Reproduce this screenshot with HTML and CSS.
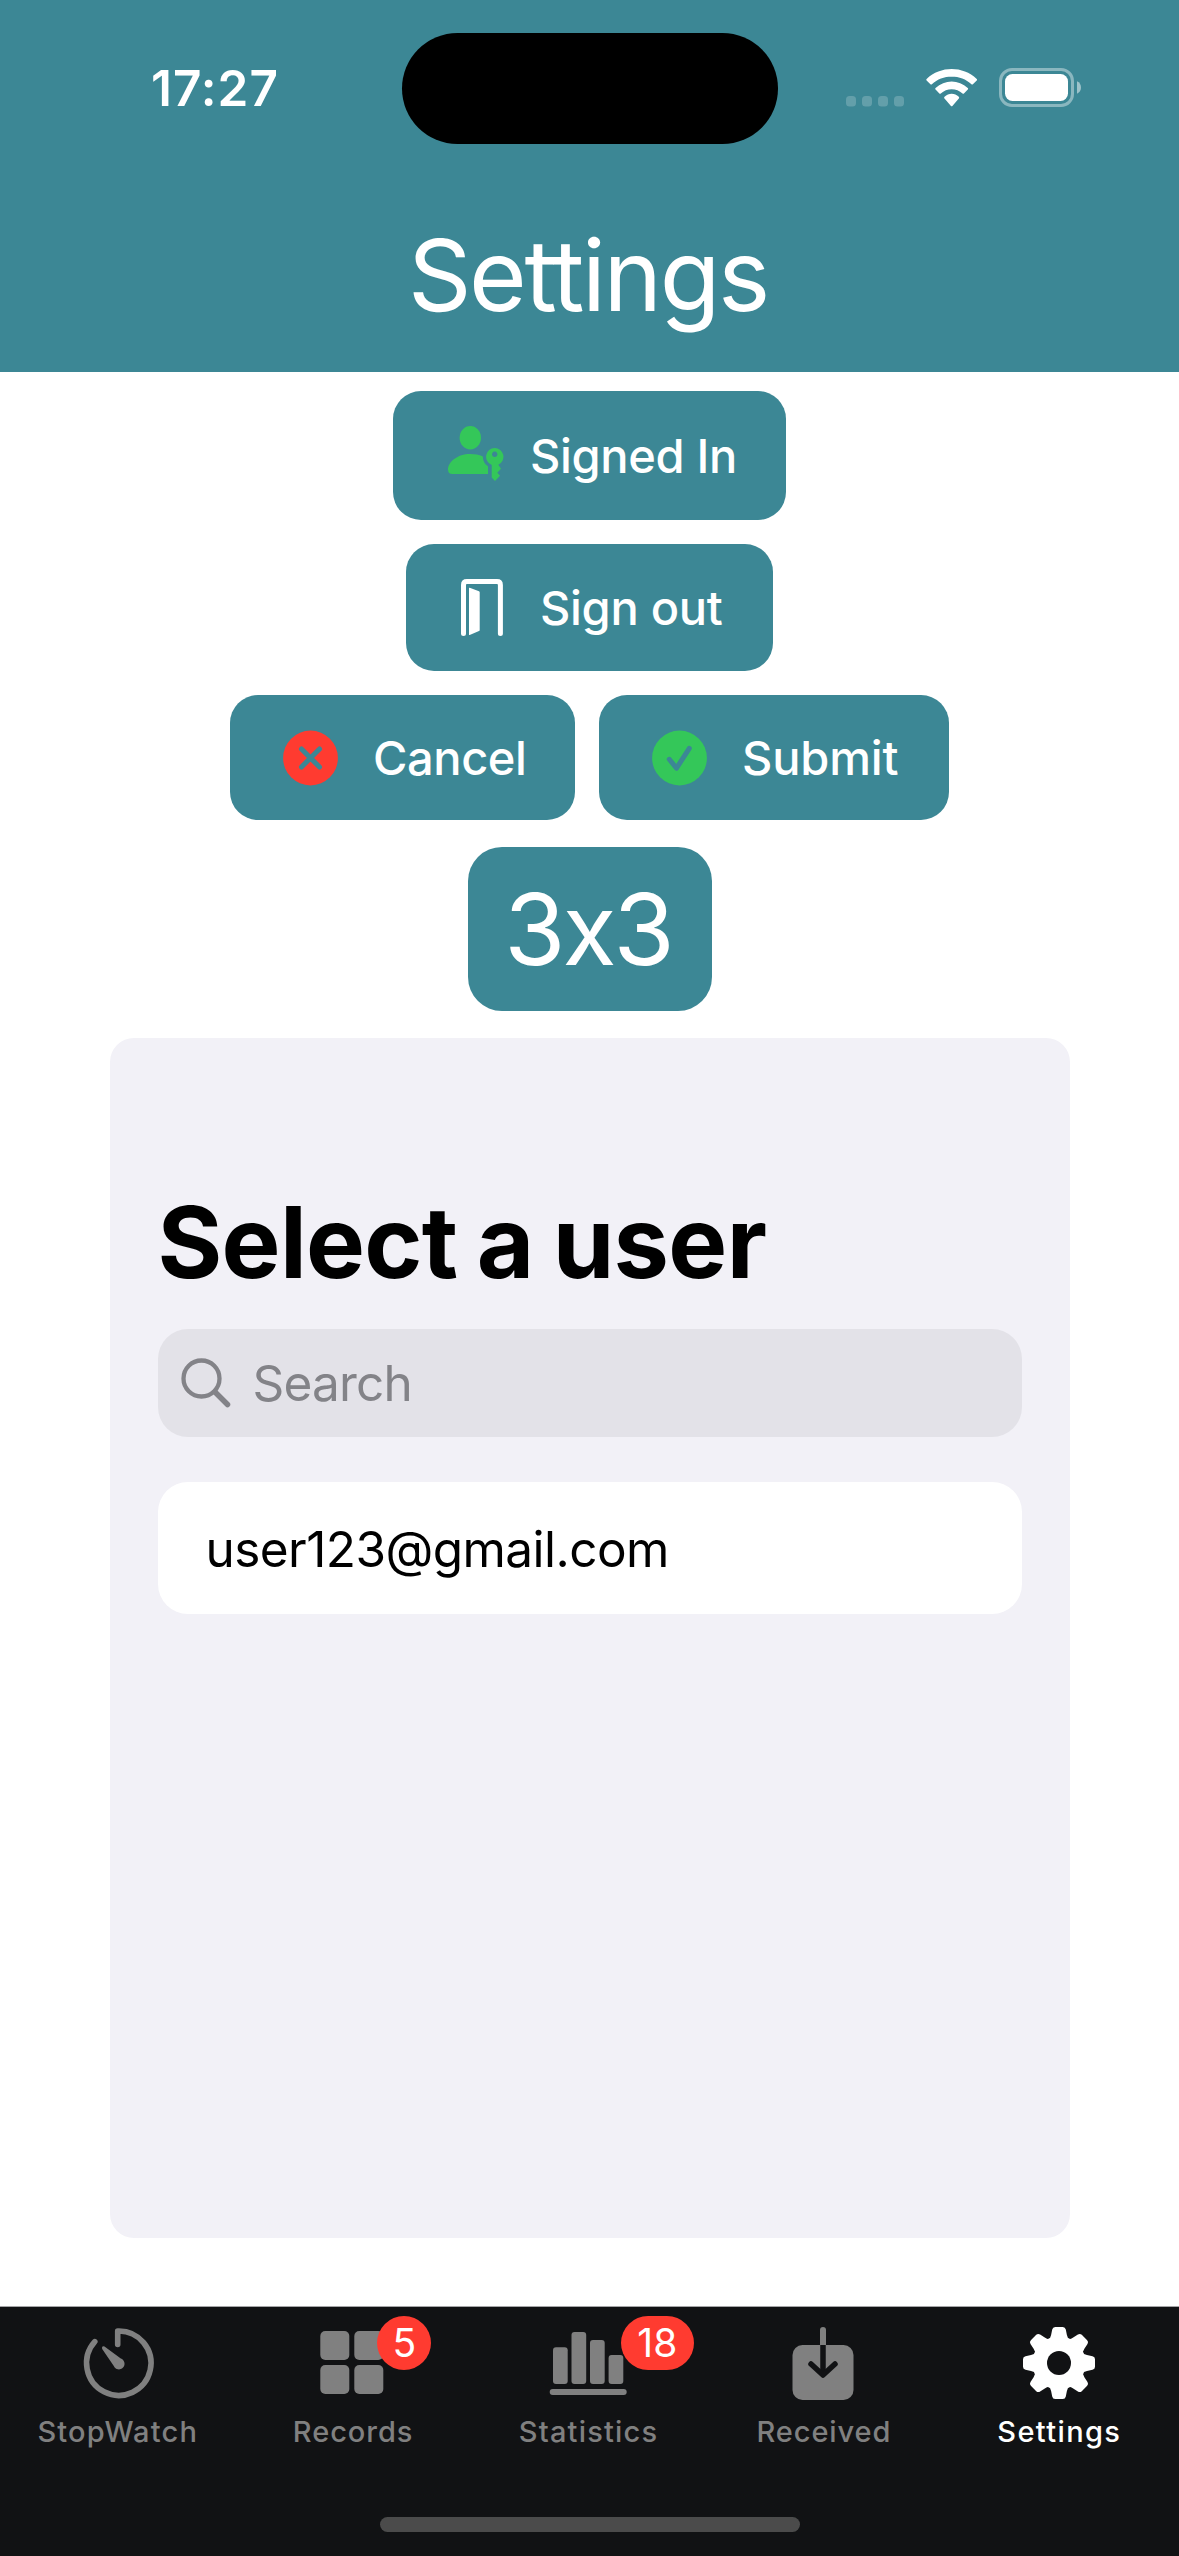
FILE: index.html
```html
<!DOCTYPE html>
<html lang="en">
<head>
<meta charset="utf-8">
<title>Settings</title>
<link rel="stylesheet" href="styles.css">
</head>
<body>
<div class="screen">
  <header class="header">
    <div class="status">
      <span class="time">17:27</span>
      <div class="island"></div>
      <svg class="status-icons" width="236" height="40" viewBox="0 0 236 40">
        <g fill="#fff" fill-opacity=".2">
          <rect x="0" y="28" width="10" height="10.5" rx="3.5"/>
          <rect x="16" y="28" width="10" height="10.5" rx="3.5"/>
          <rect x="32" y="28" width="10" height="10.5" rx="3.5"/>
          <rect x="48" y="28" width="10" height="10.5" rx="3.5"/>
        </g>
        <path transform="translate(80.3 1) scale(2.96 3.02)" fill="#fff" d="M8.57 2.466c2.488 0 4.88.922 6.683 2.576.136.128.352.126.486-.004l1.298-1.263c.068-.066.105-.155.105-.248 0-.092-.04-.181-.108-.246-4.731-4.375-12.195-4.375-16.926 0a.343.343 0 0 0-.003.494L1.403 5.038c.133.13.35.132.486.004C3.692 3.388 6.084 2.466 8.571 2.466ZM8.568 6.687c1.357 0 2.666.511 3.672 1.435.136.131.35.129.483-.006l1.288-1.319a.366.366 0 0 0-.006-.519c-3.063-2.881-7.808-2.881-10.872 0a.366.366 0 0 0-.005.519l1.287 1.319c.133.135.347.137.483.006 1.006-.923 2.314-1.435 3.67-1.435ZM11.092 9.48a.39.39 0 0 1-.102.28l-2.177 2.456a.32.32 0 0 1-.483 0L6.153 9.76a.39.39 0 0 1 .011-.556c1.39-1.315 3.425-1.315 4.816 0 .07.07.11.17.112.276Z"/>
        <rect x="154.5" y="1.5" width="72" height="36" rx="11.5" fill="none" stroke="#fff" stroke-opacity=".4" stroke-width="3"/>
        <rect x="159" y="6" width="63" height="27" rx="7.5" fill="#fff"/>
        <path d="M231 13.3c5.3 2.2 5.3 10.2 0 12.4Z" fill="#fff" fill-opacity=".5"/>
      </svg>
    </div>
    <h1 class="title">Settings</h1>
  </header>

  <main class="main">
    <button class="btn signed-in">
      <svg width="56" height="59" viewBox="0 0 56 59" fill="#34c759">
        <ellipse cx="22.3" cy="11.7" rx="10.7" ry="11.7"/>
        <path d="M4.5 48H40V40.3C36.5 38.2 35 35 34.8 30.5C31 28.7 27 28 22 28C9.500 28 0 36 0 43.500C0 46.500 1.500 48 4.500 48Z"/>
        <path fill-rule="evenodd" d="M46.700 21.900a8.800 8.800 0 0 1 3.600 16.800L53 42.700L49.300 46.700L52 49.700L47 55L43.700 51.500V38.900A8.800 8.800 0 0 1 46.700 21.900ZM46.700 25.600a2.700 2.700 0 1 0 .01 0Z"/>
      </svg>
      <span>Signed In</span>
    </button>
    <button class="btn sign-out">
      <svg width="42" height="57" viewBox="0 0 42 57">
        <path d="M2.500 54.500V6q0-3.400 3.400-3.400H36q3.400 0 3.400 3.400V54.500" fill="none" stroke="#fff" stroke-width="5" stroke-linecap="round"/>
        <path d="M8 9.200Q8 8.500 8.700 8.700L18 12.200Q18.700 12.500 18.700 13.200V51Q18.700 51.800 18 52L8.700 56Q8 56.200 8 55.500Z" fill="#fff"/>
      </svg>
      <span>Sign out</span>
    </button>
    <div class="actions">
      <button class="btn cancel">
        <svg width="56" height="56" viewBox="0 0 56 56">
          <circle cx="27.500" cy="28" r="27.400" fill="#ff3b30"/>
          <path class="cut" d="M18.500 19L36.500 37M36.500 19L18.500 37"/>
        </svg>
        <span>Cancel</span>
      </button>
      <button class="btn submit">
        <svg width="56" height="56" viewBox="0 0 56 56">
          <circle cx="27.500" cy="28" r="27.400" fill="#34c759"/>
          <path class="cut" d="M17.300 29.300L24.500 38.200L37.300 18.300"/>
        </svg>
        <span>Submit</span>
      </button>
    </div>
    <button class="btn puzzle"><span>3x3</span></button>

    <section class="panel">
      <h2 class="panel-title">Select a user</h2>
      <div class="search">
        <svg width="51" height="51" viewBox="0 0 51 51" fill="none" stroke="#838388" stroke-linecap="round">
          <circle cx="20.500" cy="20.500" r="18" stroke-width="4.300"/>
          <path d="M34 34L46.500 46.500" stroke-width="5.500"/>
        </svg>
        <span>Search</span>
      </div>
      <div class="user">user123@gmail.com</div>
    </section>
  </main>

  <nav class="tabs">
    <a class="tab">
      <svg width="80" height="80" viewBox="0 0 80 80">
        <path d="M39.700 21.500V8A32.200 32.200 0 1 1 16.800 18.700" fill="none" stroke="currentColor" stroke-width="5.600" stroke-linecap="round" stroke-linejoin="round"/>
        <path d="M26.500 23.500L42.800 35.500A5.600 5.600 0 1 1 35.800 43L24.200 26Q23.400 22.500 26.500 23.500Z" fill="currentColor"/>
      </svg>
      <span class="l-stopwatch">StopWatch</span>
    </a>
    <a class="tab">
      <svg width="80" height="80" viewBox="0 0 80 80" fill="currentColor">
        <rect x="7.300" y="8" width="29" height="29" rx="5"/><rect x="41.300" y="8" width="29" height="29" rx="5"/>
        <rect x="7.300" y="42" width="29" height="29" rx="5"/><rect x="41.300" y="42" width="29" height="29" rx="5"/>
      </svg>
      <b class="badge one">5</b>
      <span class="l-records">Records</span>
    </a>
    <a class="tab">
      <svg width="80" height="80" viewBox="0 0 80 80" fill="currentColor">
        <rect x="4" y="24.300" width="14.700" height="36.700" rx="3"/>
        <rect x="22.500" y="9" width="14.700" height="52" rx="3"/>
        <rect x="41" y="17" width="14.700" height="44" rx="3"/>
        <rect x="59.600" y="32" width="14.700" height="29" rx="3"/>
        <rect x="0.700" y="66" width="77" height="6" rx="3"/>
      </svg>
      <b class="badge two">18</b>
      <span class="l-statistics">Statistics</span>
    </a>
    <a class="tab">
      <svg width="80" height="80" viewBox="0 0 80 80">
        <rect x="8.500" y="22" width="61" height="55" rx="10" fill="currentColor"/>
        <path d="M39 7V24" stroke="currentColor" stroke-width="6" stroke-linecap="round"/>
        <path d="M39 22V51" stroke="#111214" stroke-width="5.500" fill="none"/>
        <path d="M27 41L39 52L51 41" stroke="#111214" stroke-width="5.500" fill="none" stroke-linecap="round" stroke-linejoin="round"/>
      </svg>
      <span class="l-received">Received</span>
    </a>
    <a class="tab active">
      <svg width="80" height="80" viewBox="-40 -40 80 80">
        <defs><path id="tooth" d="M-11 -23Q-8.500 -24.500 -7.900 -28L-6.800 -33.500Q-6.200 -36 -3.800 -36H3.800Q6.200 -36 6.800 -33.500L7.900 -28Q8.500 -24.500 11 -23Z"/></defs>
        <g fill="currentColor">
          <use href="#tooth"/><use href="#tooth" transform="rotate(45)"/><use href="#tooth" transform="rotate(90)"/><use href="#tooth" transform="rotate(135)"/>
          <use href="#tooth" transform="rotate(180)"/><use href="#tooth" transform="rotate(225)"/><use href="#tooth" transform="rotate(270)"/><use href="#tooth" transform="rotate(315)"/>
          <circle r="26.500"/>
        </g>
        <circle r="12" fill="#111214"/>
      </svg>
      <span class="l-settings">Settings</span>
    </a>
    <div class="home-indicator"></div>
  </nav>
</div>
</body>
</html>
```
FILE: styles.css
```css
* { box-sizing: border-box; }
body { margin: 0; background: #fff; font-family: Inter, "Liberation Sans", sans-serif; }
svg { display: block; flex: none; }
h1, h2 { margin: 0; }
.screen { width: 1179px; height: 2556px; display: flex; flex-direction: column; overflow: hidden; }

.header { height: 372px; background: #3c8795; color: #fff; padding-top: 33px; }
.status { height: 111px; display: flex; }
.time { width: 402px; padding-left: 151px; font-size: 49.5px; font-weight: 600; line-height: 110px; letter-spacing: 1px; }
.island { width: 376px; height: 111px; border-radius: 56px; background: #000; }
.status-icons { margin: 35px 0 0 68px; }
.title { padding-left: 408px; margin-top: 71px; font-size: 99px; font-weight: 400; line-height: 121px; letter-spacing: -2.4px; white-space: nowrap; }

.main { flex: 1; display: flex; flex-direction: column; align-items: center; padding-top: 19px; }
.btn { display: flex; align-items: center; border: 0; padding: 0 0 0 55px; background: #3c8795; color: #fff; border-radius: 28px; font: 500 47px/60px Inter, "Liberation Sans", sans-serif; white-space: nowrap; }
.signed-in { width: 393px; height: 129px; gap: 26px; letter-spacing: -.32px; }
.sign-out { width: 367px; height: 127px; margin-top: 24px; gap: 37px; letter-spacing: -.3px; }
.actions { display: flex; gap: 24px; margin-top: 24px; }
.cancel { width: 345px; height: 125px; padding-left: 53px; gap: 34px; letter-spacing: -.43px; }
.submit { width: 350px; height: 125px; padding-left: 53px; gap: 34px; letter-spacing: -.16px; }
.cut { fill: none; stroke: #3c8795; stroke-width: 5; stroke-linecap: round; stroke-linejoin: round; }
.puzzle { width: 244px; height: 164px; margin-top: 27px; padding: 0 3px 0 0; justify-content: center; border-radius: 34px; font-size: 99px; font-weight: 400; letter-spacing: -3px; font-feature-settings: "calt" 0; }

.panel { width: 960px; height: 1200px; margin-top: 27px; padding: 144px 48px 0; border-radius: 24px; background: #f2f1f7; }
.panel-title { font-size: 99px; font-weight: 700; line-height: 120px; letter-spacing: -.7px; word-spacing: -3.5px; white-space: nowrap; }
.search { display: flex; align-items: center; gap: 21px; height: 108px; margin-top: 27px; padding-left: 23px; border-radius: 30px; background: #e3e2e8; color: #838388; font-size: 49.5px; line-height: 62px; letter-spacing: -.8px; }
.user { height: 132px; margin-top: 45px; padding-left: 48px; border-radius: 30px; background: #fff; color: #000; font-size: 49.5px; line-height: 134px; letter-spacing: -.55px; }

.tabs { position: relative; flex: none; height: 250px; display: flex; padding-right: 2px; border-top: 1px solid #a4a4a6; background: #111214; color: #808080; }
.tab { position: relative; flex: 1; display: flex; flex-direction: column; align-items: center; padding-top: 16px; }
.tab span { margin-top: 9px; font-size: 29px; font-weight: 500; line-height: 40px; }
.active { color: #fff; }
.l-stopwatch { letter-spacing: 1.17px; }
.l-records { letter-spacing: .95px; }
.l-statistics { letter-spacing: 1.18px; }
.l-received { letter-spacing: .91px; }
.l-settings { letter-spacing: 1.37px; }
.badge { position: absolute; top: 9px; height: 54px; border-radius: 27px; background: #ff3b30; color: #fff; font-size: 39px; font-weight: 400; line-height: 53px; text-align: center; }
.one { left: 142px; width: 54px; }
.two { left: 150px; width: 73px; }
.home-indicator { position: absolute; left: 380px; top: 210px; width: 420px; height: 15px; border-radius: 8px; background: #4b4b4b; }
```
